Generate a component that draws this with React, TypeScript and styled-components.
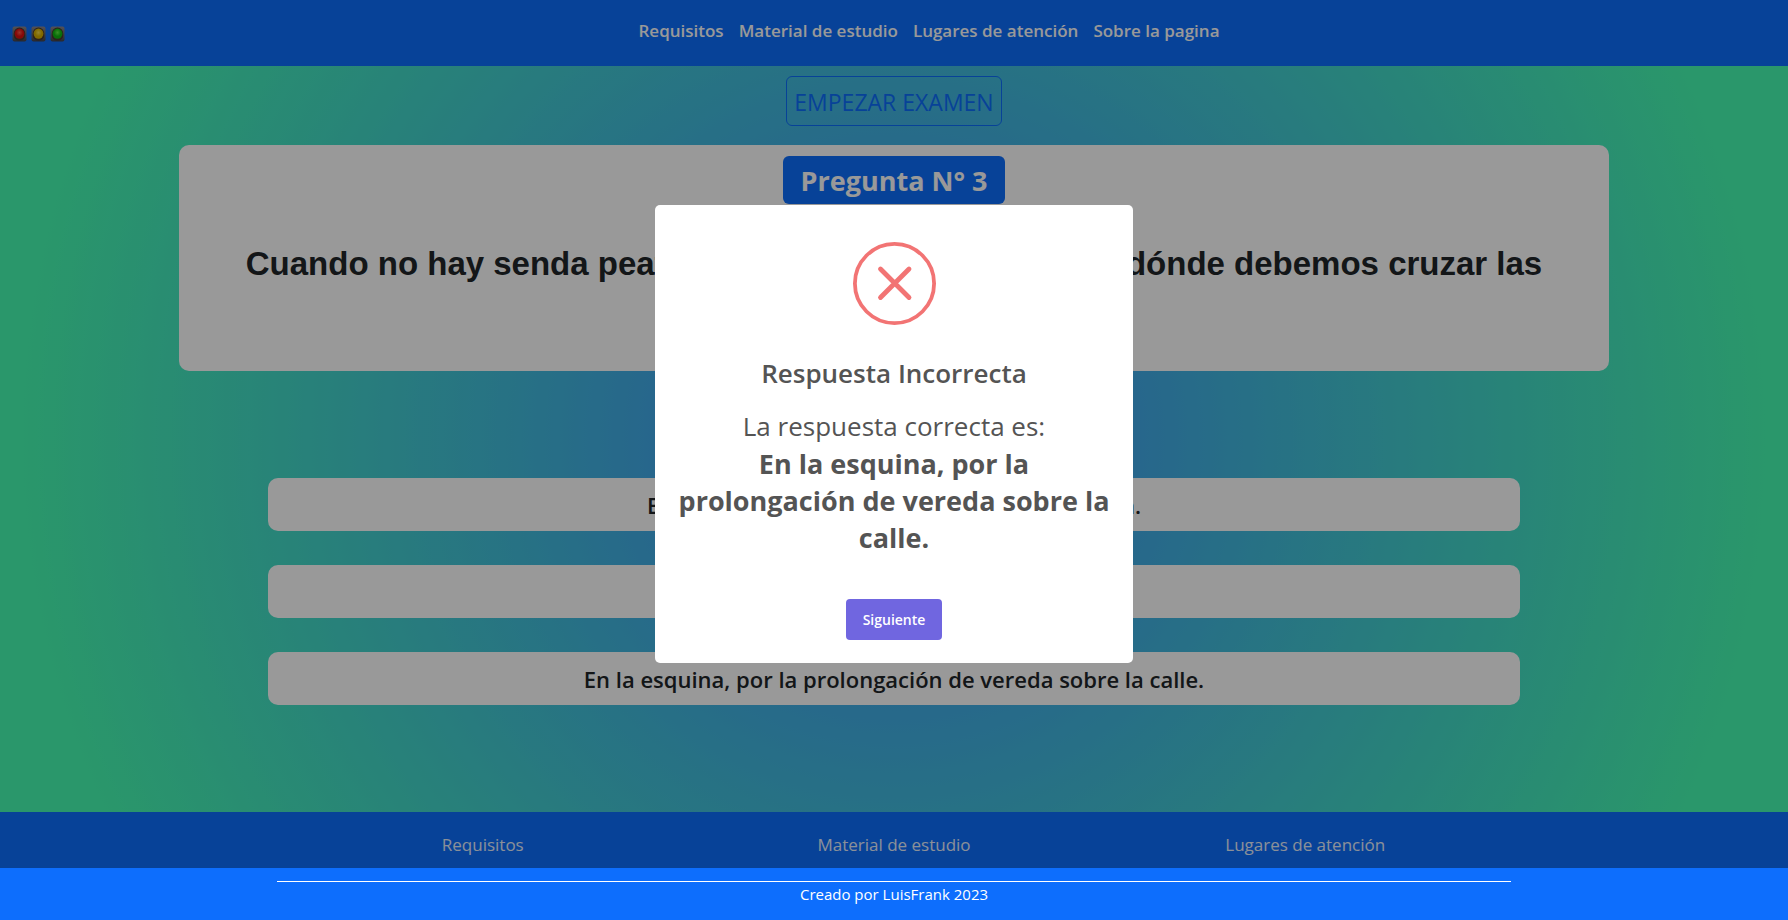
import React from "react";
import styled, { createGlobalStyle } from "styled-components";

const GlobalStyle = createGlobalStyle`
  *, *::before, *::after { box-sizing: border-box; }
  body {
    margin: 0;
    font-family: "Open Sans", "Noto Sans", sans-serif;
    font-size: 16px;
    line-height: 24px;
    color: #212529;
    background: #0d6efd;
  }
`;

const Stage = styled.div`
  position: relative;
  display: flex;
  flex-direction: column;
`;

const Header = styled.header`
  display: grid;
  grid-template-columns: 1fr auto 1fr;
  align-items: center;
  padding: 14px 12px 18px;
  min-height: 66px;
  background: #0d6efd;
`;

const Brand = styled.a`
  display: flex;
  padding-top: 6px;
  gap: 4px;
`;

const TopNav = styled.nav`
  display: flex;
  gap: 15px;
  padding-left: 70px;
`;

const NavLink = styled.a<{ $strong?: boolean }>`
  color: #fff;
  font-size: 17px;
  line-height: 24px;
  font-weight: ${(p) => (p.$strong ? 600 : 400)};
  text-decoration: none;
  opacity: ${(p) => (p.$strong ? 1 : 0.9)};
`;

const Main = styled.main`
  display: flex;
  flex-direction: column;
  align-items: center;
  padding: 10px 0 107px;
  background: radial-gradient(circle, #3f8cff 0%, #46fcb2 90%);
`;

const StartButton = styled.button`
  height: 50px;
  padding: 2px 7px 0;
  border: 1px solid #0d6efd;
  border-radius: 6px;
  background: transparent;
  color: #0d6efd;
  font: inherit;
  font-size: 23px;
`;

const QuestionCard = styled.section`
  display: flex;
  flex-direction: column;
  align-items: center;
  width: 80%;
  min-height: 226px;
  margin-top: 19px;
  padding: 11px 24px;
  border-radius: 10px;
  background: #fff;
`;

const QuestionBadge = styled.h2`
  margin: 0;
  padding: 2px 18px 0;
  border-radius: 6px;
  background: #0d6efd;
  color: #fff;
  font-size: 27px;
  line-height: 46px;
  font-weight: 700;
`;

const QuestionText = styled.h1`
  margin: 41px 0 0;
  font-family: "Liberation Sans", Arial, sans-serif;
  font-size: 33px;
  line-height: 38px;
  font-weight: 700;
  text-align: center;
`;

const Options = styled.div`
  display: flex;
  flex-direction: column;
  gap: 34px;
  width: 70%;
  margin-top: 107px;
`;

const Option = styled.button`
  height: 53px;
  border: 0;
  border-radius: 10px;
  background: #fff;
  color: #212529;
  font: inherit;
  font-size: 22px;
  font-weight: 600;
`;

const FooterNav = styled.nav`
  padding: 21px 0 11px;
  background: #0d6efd;
`;

const FooterColumns = styled.div`
  display: grid;
  grid-template-columns: repeat(3, 1fr);
  justify-items: center;
  width: 69%;
  margin: 0 auto;
`;

const Credits = styled.footer`
  width: 69%;
  margin: 13px auto 0;
  border-top: 1px solid #fff;
  color: #fff;
  font-size: 15px;
  line-height: 24px;
  text-align: center;
`;

const Backdrop = styled.div`
  position: absolute;
  inset: 0;
  display: flex;
  align-items: center;
  justify-content: center;
  background: rgba(0, 0, 0, 0.4);
`;

const Dialog = styled.div`
  display: flex;
  flex-direction: column;
  align-items: center;
  width: 478px;
  padding: 37px 20px 23px;
  border-radius: 5px;
  background: #fff;
  color: #545454;
  text-align: center;
`;

const DialogTitle = styled.h2`
  margin: 28px 0 0;
  font-size: 26px;
  line-height: 40px;
  font-weight: 600;
`;

const DialogText = styled.p`
  margin: 15px 0 0;
  font-size: 26px;
  line-height: 37px;
`;

const CorrectAnswer = styled.strong`
  display: block;
  font-size: 27px;
  font-weight: 700;
`;

const NextButton = styled.button`
  height: 41px;
  margin-top: 43px;
  padding: 0 17px;
  border: 0;
  border-radius: 4px;
  background: #7066e0;
  color: #fff;
  font: inherit;
  font-size: 14px;
  font-weight: 600;
`;

const lamps = [
  { id: "red", body: "#e01010", glow: "#ff5a4a" },
  { id: "amber", body: "#d8b000", glow: "#f5dc50" },
  { id: "green", body: "#10b810", glow: "#60f040" },
];

function Lamp({ id, body, glow }: { id: string; body: string; glow: string }) {
  return (
    <svg width="15" height="16" viewBox="0 0 15 16" aria-hidden="true">
      <defs>
        <radialGradient id={`lamp-${id}`} cx="50%" cy="40%" r="60%">
          <stop offset="0" stopColor={glow} />
          <stop offset="0.6" stopColor={body} />
          <stop offset="1" stopColor={body} />
        </radialGradient>
        <linearGradient id={`case-${id}`} x1="0" y1="0" x2="0" y2="1">
          <stop offset="0" stopColor="#8a8890" />
          <stop offset="1" stopColor="#45444c" />
        </linearGradient>
      </defs>
      <rect x="0.5" y="0.5" width="14" height="15" rx="2" fill={`url(#case-${id})`} />
      <path d="M1.8 7.5a5.7 6 0 0 1 11.4 0v2.5a5.7 4.5 0 0 1-11.4 0z" fill="#4a3a30" />
      <ellipse cx="7.5" cy="7.6" rx="4.9" ry="5.2" fill={`url(#lamp-${id})`} />
    </svg>
  );
}

const sections = ["Requisitos", "Material de estudio", "Lugares de atención"];
const options = [
  "En cualquier sector de la calle, con precaución.",
  "Por la mitad de la cuadra.",
  "En la esquina, por la prolongación de vereda sobre la calle.",
];

export default function App() {
  return (
    <>
      <GlobalStyle />
      <Stage>
        <Header>
          <Brand href="#" aria-label="Inicio">
            {lamps.map((lamp) => (
              <Lamp key={lamp.id} {...lamp} />
            ))}
          </Brand>
          <TopNav>
            {[...sections, "Sobre la pagina"].map((label) => (
              <NavLink key={label} href="#" $strong>
                {label}
              </NavLink>
            ))}
          </TopNav>
        </Header>
        <Main>
          <StartButton type="button">EMPEZAR EXAMEN</StartButton>
          <QuestionCard>
            <QuestionBadge>Pregunta N° 3</QuestionBadge>
            <QuestionText>
              Cuando no hay senda peatonal ni semáforo cerca, ¿por dónde debemos cruzar las calles?
            </QuestionText>
          </QuestionCard>
          <Options>
            {options.map((label) => (
              <Option key={label} type="button">
                {label}
              </Option>
            ))}
          </Options>
        </Main>
        <FooterNav>
          <FooterColumns>
            {sections.map((label) => (
              <NavLink key={label} href="#">
                {label}
              </NavLink>
            ))}
          </FooterColumns>
        </FooterNav>
        <Backdrop>
          <Dialog role="dialog" aria-modal="true" aria-labelledby="result-title">
            <svg width="83" height="83" viewBox="0 0 83 83" aria-hidden="true">
              <g fill="none" stroke="#f27474">
                <circle cx="41.5" cy="41.5" r="39.6" strokeWidth="3.8" />
                <path d="M27.5 27l28.5 28.5M56 27l-28.5 28.5" strokeWidth="4.8" strokeLinecap="round" />
              </g>
            </svg>
            <DialogTitle id="result-title">Respuesta Incorrecta</DialogTitle>
            <DialogText>
              La respuesta correcta es:
              <CorrectAnswer>En la esquina, por la prolongación de vereda sobre la calle.</CorrectAnswer>
            </DialogText>
            <NextButton type="button">Siguiente</NextButton>
          </Dialog>
        </Backdrop>
      </Stage>
      <Credits>Creado por LuisFrank 2023</Credits>
    </>
  );
}
